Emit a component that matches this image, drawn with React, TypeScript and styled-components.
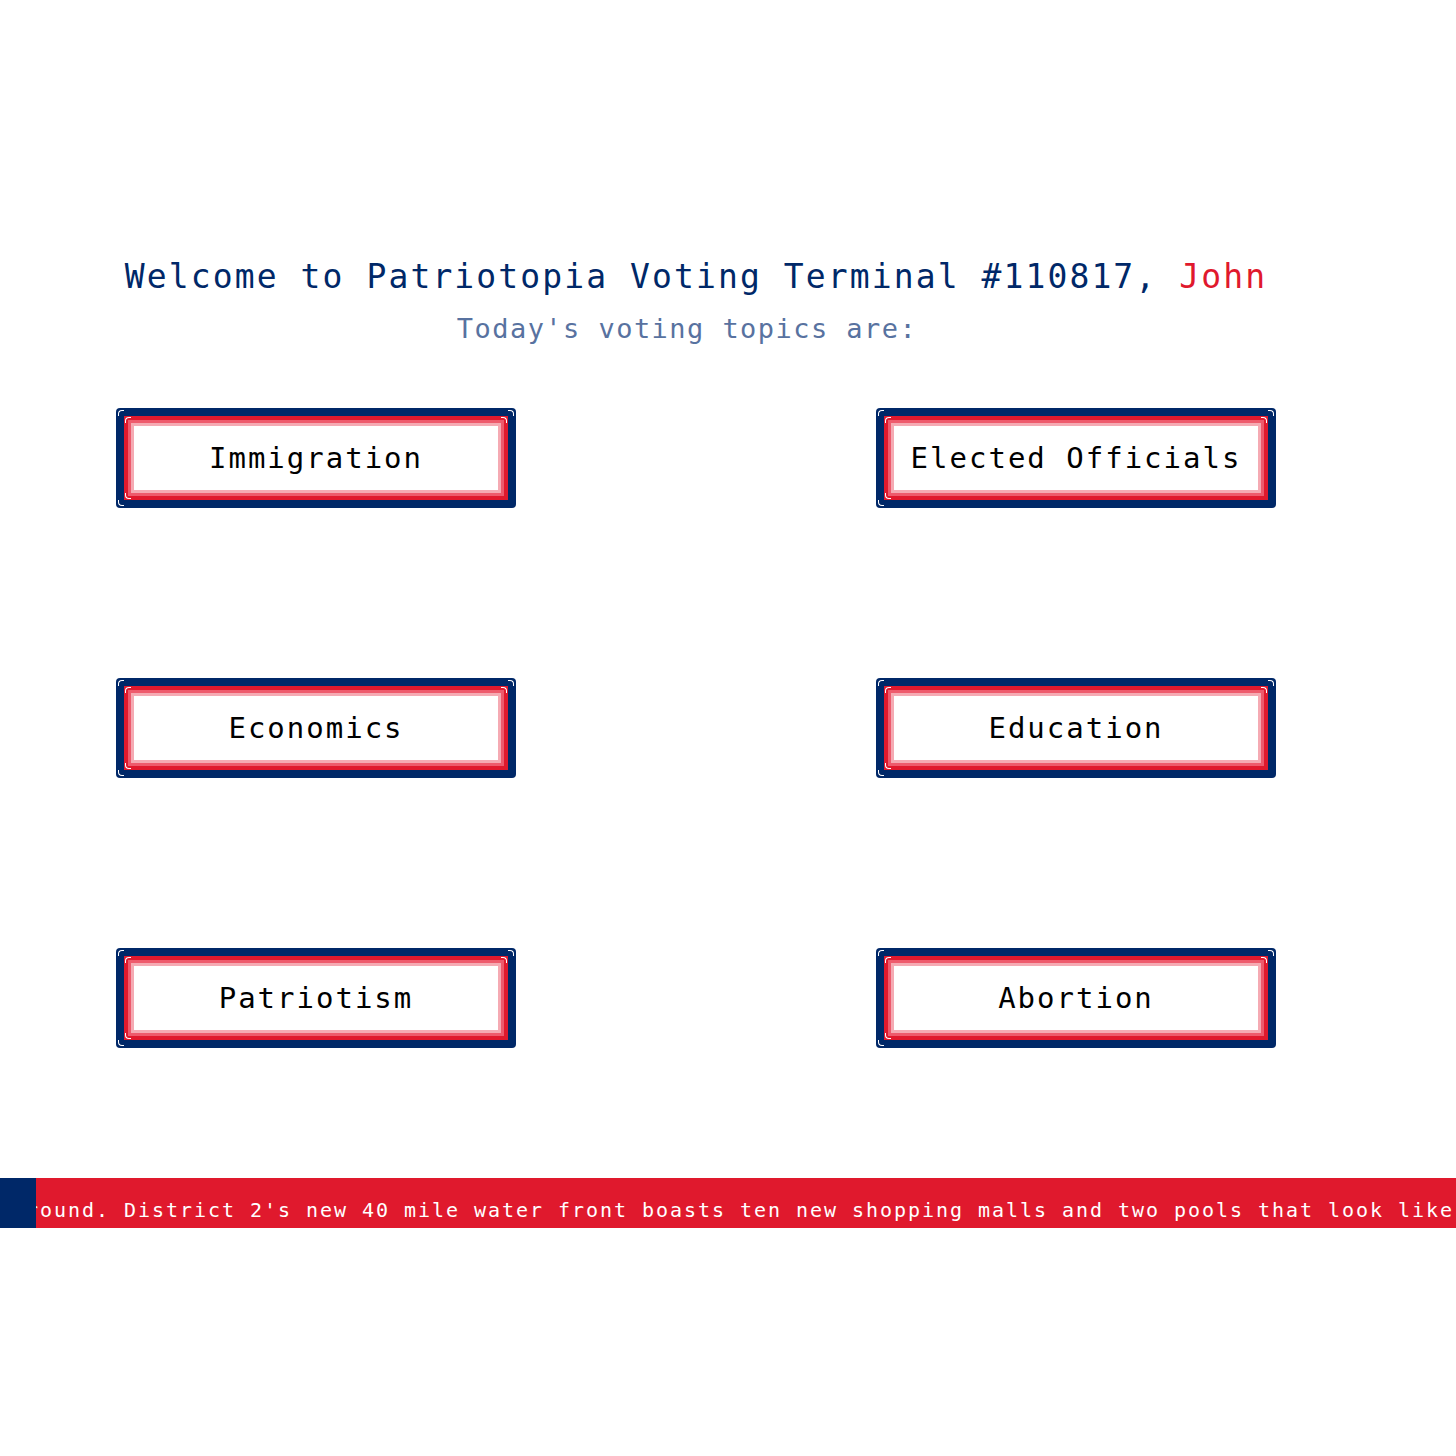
import styled, { createGlobalStyle } from "styled-components"

const navy = "#002868";
const red = "#e0192d";

const GlobalStyle = createGlobalStyle`
  html, body {
    margin: 0;
    padding: 0;
    background: #ffffff;
  }
  body {
    font-family: "DejaVu Sans Mono", "Liberation Mono", monospace;
  }
`;

const Page = styled.div`
  width: 100%;
  padding-top: 257px;
`;

const Content = styled.main`
  width: 1392px;
  display: flex;
  flex-direction: column;
  align-items: center;
`;

const Title = styled.h1`
  margin: 0;
  font-weight: 400;
  font-size: 33px;
  line-height: 40px;
  letter-spacing: 2.1px;
  color: ${navy};
  white-space: nowrap;
`;

const Name = styled.span`
  color: ${red};
`;

const Subtitle = styled.h2`
  margin: 15px 0 0;
  padding-right: 18px;
  font-weight: 400;
  font-size: 27px;
  line-height: 34px;
  letter-spacing: 1.45px;
  color: #5872a0;
  white-space: nowrap;
`;

const Topics = styled.div`
  align-self: stretch;
  display: grid;
  grid-template-columns: 400px 400px;
  justify-content: space-between;
  row-gap: 170px;
  margin-top: 62px;
  padding: 0 116px;
`;

const Frame = styled.button`
  position: relative;
  width: 400px;
  height: 100px;
  padding: 8px;
  border: none;
  border-radius: 4px;
  background: ${navy};
  cursor: pointer;
  display: flex;
`;

const RedBand = styled.div`
  position: relative;
  flex: 1;
  padding: 4px;
  background: ${red};
  display: flex;
`;

const Face = styled.div`
  flex: 1;
  display: flex;
  align-items: center;
  justify-content: center;
  background: #ffffff;
  box-shadow: inset 0 0 0 3px #ee5a6c, inset 0 0 0 6px #f5aab3;
  font-family: "DejaVu Sans Mono", "Liberation Mono", monospace;
  font-size: 29px;
  letter-spacing: 2px;
  color: #000000;
  white-space: nowrap;
`;

const Corner = styled.span<{ $v: "top" | "bottom"; $h: "left" | "right"; $off: number }>`
  position: absolute;
  ${p => p.$v}: ${p => p.$off}px;
  ${p => p.$h}: ${p => p.$off}px;
  width: 5px;
  height: 5px;
  border-${p => p.$v}: 1px solid #ffffff;
  border-${p => p.$h}: 1px solid #ffffff;
  border-${p => p.$v}-${p => p.$h}-radius: 4px;
  pointer-events: none;
`;

const Ticker = styled.div`
  margin-top: 130px;
  width: 100%;
  height: 50px;
  display: flex;
  background: ${red};
  overflow: hidden;
`;

const TickerBlock = styled.div`
  width: 36px;
  flex: none;
  background: ${navy};
`;

const TickerTrack = styled.div`
  flex: 1;
  overflow: hidden;
  padding-top: 22px;
`;

const TickerText = styled.p`
  margin: 0 0 0 -10px;
  font-size: 20px;
  line-height: 20px;
  letter-spacing: 1.96px;
  color: #ffffff;
  white-space: nowrap;
`;

const topics = [
  "Immigration",
  "Elected Officials",
  "Economics",
  "Education",
  "Patriotism",
  "Abortion",
];

const TopicButton = ({ label }: { label: string }) => {
  return (
    <Frame>
      <Corner $v="top" $h="left" $off={2} />
      <Corner $v="top" $h="right" $off={2} />
      <Corner $v="bottom" $h="left" $off={2} />
      <RedBand>
        <Corner $v="top" $h="left" $off={1} />
        <Corner $v="top" $h="right" $off={1} />
        <Corner $v="bottom" $h="left" $off={1} />
        <Face>{label}</Face>
      </RedBand>
    </Frame>
  )
}

const App = () => {
  return (
    <Page>
      <GlobalStyle />
      <Content>
        <Title>
          Welcome to Patriotopia Voting Terminal #110817, <Name>John</Name>
        </Title>
        <Subtitle>Today's voting topics are:</Subtitle>
        <Topics>
          {topics.map((t) => (
            <TopicButton key={t} label={t} />
          ))}
        </Topics>
      </Content>
      <Ticker>
        <TickerBlock />
        <TickerTrack>
          <TickerText>
            round. District 2's new 40 mile water front boasts ten new shopping malls and two pools that look like
          </TickerText>
        </TickerTrack>
      </Ticker>
    </Page>
  )
}

export default App;
